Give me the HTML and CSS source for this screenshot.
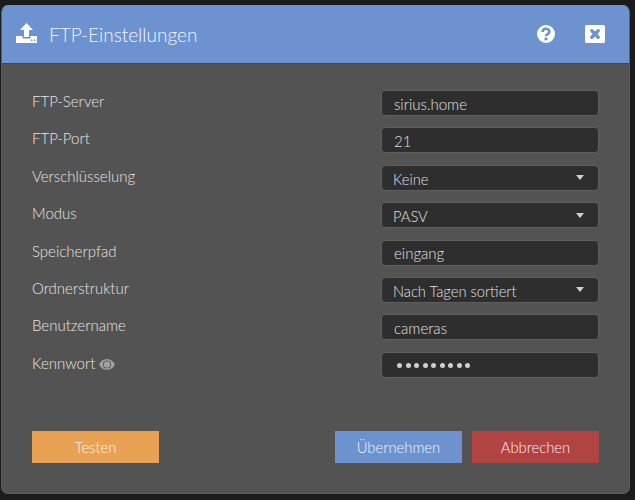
FILE: index.html
```
<!DOCTYPE html>
<html lang="de">
<head>
<meta charset="utf-8">
<title>FTP-Einstellungen</title>
<link rel="stylesheet" href="styles.css">
</head>
<body>
<div class="dialog">
  <header class="head">
    <svg class="upload" viewBox="0 0 21 20" width="21" height="20"><path fill="#fff" d="M10.500 0 17 7h-4v7H8V7H4zM0 13h6.500v2.500h8V13H21v7H0z"/><rect x="15" y="16.500" width="1.500" height="1.500" fill="#6d92d0"/><rect x="18" y="16.500" width="1.500" height="1.500" fill="#6d92d0"/></svg>
    <h1 class="title">FTP-Einstellungen</h1>
    <svg class="help" viewBox="0 0 18 18" width="18" height="18"><circle cx="9" cy="9" r="9" fill="#fff"/><path fill="none" stroke="#6d92d0" stroke-width="2.600" d="M5.600 7c0-4.300 6.800-4.300 6.800-.2 0 2.300-3.400 2.400-3.400 4.400"/><rect x="7.500" y="12.600" width="3" height="2.700" fill="#6d92d0"/></svg>
    <svg class="close" viewBox="0 0 20 18" width="20" height="18"><rect width="20" height="18" rx="1.500" fill="#fff"/><path stroke="#6d92d0" stroke-width="3.400" stroke-linecap="round" d="m6.800 5.800 6.400 6.400m0-6.400-6.400 6.400"/></svg>
  </header>
  <div class="body">
    <div class="rows">
      <div class="row"><label class="lab">FTP-Server</label><div class="field">sirius.home</div></div>
      <div class="row"><label class="lab">FTP-Port</label><div class="field">21</div></div>
      <div class="row"><label class="lab">Verschlüsselung</label><div class="field select">Keine<i class="caret"></i></div></div>
      <div class="row"><label class="lab">Modus</label><div class="field select">PASV<i class="caret"></i></div></div>
      <div class="row"><label class="lab">Speicherpfad</label><div class="field">eingang</div></div>
      <div class="row"><label class="lab">Ordnerstruktur</label><div class="field select">Nach Tagen sortiert<i class="caret"></i></div></div>
      <div class="row"><label class="lab">Benutzername</label><div class="field">cameras</div></div>
      <div class="row"><label class="lab">Kennwort <svg class="eye" viewBox="0 0 16 11" width="16" height="11"><path fill="#a0a0a0" fill-rule="evenodd" d="M8 0c3.500 0 6.300 2.200 8 5.500C14.300 8.800 11.500 11 8 11S1.700 8.800 0 5.500C1.700 2.200 4.500 0 8 0zm0 1.400a4.100 4.100 0 1 0 0 8.200 4.100 4.100 0 0 0 0-8.200z"/><circle cx="8" cy="5.500" r="3.200" fill="#a0a0a0"/></svg></label><div class="field dots"><span class="dot"></span><span class="dot"></span><span class="dot"></span><span class="dot"></span><span class="dot"></span><span class="dot"></span><span class="dot"></span><span class="dot"></span><span class="dot"></span></div></div>
    </div>
    <div class="actions">
      <button class="btn orange">Testen</button>
      <div class="right">
        <button class="btn blue">Übernehmen</button>
        <button class="btn red">Abbrechen</button>
      </div>
    </div>
  </div>
</div>
</body>
</html>
```
FILE: styles.css
```
* { box-sizing: border-box; }
html, body { margin: 0; height: 500px; overflow: hidden; }
body { background: #1b1b1b; font-family: Lato, "Open Sans", sans-serif; padding: 5px 5px 6px 1px; }
.dialog { width: 629px; height: 489px; border-radius: 7px; overflow: hidden; background: #535353; display: flex; flex-direction: column; border: 1px solid #5f5f5f; border-top: 0; }
.head { height: 59px; flex: none; background: #6d92d0; border-bottom: 1px solid #454545; display: flex; align-items: center; padding: 0 24px 0 14px; color: #fff; }
.upload { flex: none; margin-right: 13px; margin-top: -3px; }
.title { flex: 1; margin: 0 0 0 -1px; font-size: 19px; font-weight: 300; color: #f2f5fb; }
.help { margin-right: 30px; margin-top: -1px; }
.close { margin-top: -1px; }
.body { flex: 1; display: flex; flex-direction: column; justify-content: space-between; padding: 26px 30px 30px 30px; }
.rows { display: flex; flex-direction: column; gap: 11.400px; }
.row { display: flex; justify-content: space-between; align-items: flex-start; height: 26px; }
.lab { font-size: 15px; font-weight: 300; color: #e8e5e0; line-height: 22px; }
.eye { vertical-align: -1px; margin-left: -1px; }
.field { width: 218px; height: 26px; background: #2e2e2e; border: 1px solid #5f5f5f; border-radius: 4px; padding: 1px 12px 0; font-size: 15px; font-weight: 300; line-height: 26px; color: #e0e0e0; display: flex; justify-content: space-between; align-items: center; }
.select { padding: 2px 14px 0 11px; font-size: 14.700px; }
.caret { width: 0; height: 0; margin-top: -2px; border-left: 4.500px solid transparent; border-right: 4.500px solid transparent; border-top: 5px solid #d0d0d0; }
.dots { justify-content: flex-start; gap: 3.500px; padding-left: 15px; }
.dot { width: 5px; height: 5px; border-radius: 50%; background: #cfcfcf; }
.actions { display: flex; justify-content: space-between; }
.right { display: flex; gap: 10px; }
.btn { width: 127px; height: 32px; border: 0; font: 300 14.800px Lato, "Open Sans", sans-serif; padding: 0; border-radius: 0; }
.orange { background: #e9a154; color: #fff6ea; }
.blue { background: #6d92d0; color: #f2f6fc; }
.red { background: #b14343; color: #fdf0f0; }
```
